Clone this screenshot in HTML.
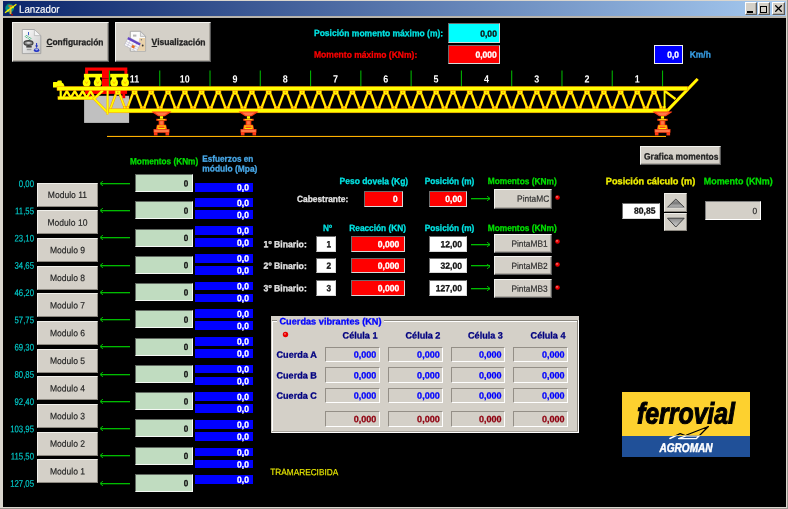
<!DOCTYPE html>
<html><head><meta charset="utf-8"><title>Lanzador</title>
<style>
*{margin:0;padding:0;box-sizing:border-box}
html,body{width:788px;height:509px;overflow:hidden;background:#000}
body{font-family:"Liberation Sans",sans-serif;font-size:9px;color:#000;position:relative;}
.a{position:absolute}
.t{position:absolute;left:0;top:0;white-space:nowrap;line-height:40px;height:40px;transform-origin:0 0}
.btn{position:absolute;background:#d4d0c8;border:1px solid;border-color:#f4f4f0 #5a5a5a #5a5a5a #f4f4f0;box-shadow:inset -0.8px -0.8px 0 #a09c94}
.mod{position:absolute;background:#d4d0c8;left:37px;width:61.2px;height:24px;border:1px solid;border-color:#f0efea #8c8880 #8c8880 #f0efea}
.gb{position:absolute;background:#c0dcc0;left:135.2px;width:58.2px;height:18px;border:1px solid;border-color:#606860 #f4f8f4 #f4f8f4 #606860}
.bb{position:absolute;background:#0000ff;left:194.8px;width:58.2px;height:8.8px}
.ar{position:absolute;height:1.25px;background:#00bc00}
.sun{position:absolute;border:1.4px solid;border-color:#6c6c6c #d8d8d8 #d8d8d8 #6c6c6c}
</style></head><body><div id="w" style="position:absolute;left:0;top:0;width:788px;height:509px;will-change:transform">

<div class="a" style="left:0;top:0;width:788px;height:509px;background:#dad6ce"></div>
<div class="a" style="left:787px;top:0;width:1px;height:509px;background:#9a9690"></div>
<div class="a" style="left:0;top:508px;width:788px;height:1px;background:#9a9690"></div>
<div class="a" style="left:3px;top:16.2px;width:783px;height:1.6px;background:#b8b4ac"></div>
<div class="a" style="left:2.9px;top:17.7px;width:782.9px;height:489.4px;background:#000"></div>
<div class="a" style="left:2.9px;top:1.3px;width:782.9px;height:14.9px;background:linear-gradient(90deg,#0a246a 0%,#a6caf0 100%)"></div>
<svg class="a" style="left:4px;top:2px" width="14" height="14" viewBox="4 2 14 14">
<circle cx="9.6" cy="8.2" r="4.6" fill="#00908c"/>
<circle cx="9.6" cy="8.2" r="4.6" fill="none" stroke="#103050" stroke-width="0.6"/>
<rect x="9.6" y="5.4" width="1.9" height="8.8" fill="#e0b030"/>
<rect x="8.4" y="5.2" width="4.2" height="1.5" fill="#d87018"/>
<path d="M5 12.8 L16.4 4.2" stroke="#f0f000" stroke-width="1.3"/>
<rect x="7.2" y="9.6" width="2" height="1.8" fill="#f0f000"/>
<rect x="12" y="6.4" width="1.8" height="1.8" fill="#f0f000"/>
<circle cx="12" cy="14.6" r="0.9" fill="#c80000"/>
</svg>
<div class="t" style="font-size:10.5px;color:#fff;transform:translate(19.00px,-11.18px) scaleX(0.9273) rotate(0.05deg);-webkit-text-stroke:0.15px;">Lanzador</div>
<div class="a" style="left:745px;top:2.3px;width:11.8px;height:12.3px;background:#d4d0c8;border:1px solid;border-color:#fff #5c5c5c #5c5c5c #fff;box-shadow:inset -0.8px -0.8px 0 #a8a49c"></div>
<div class="a" style="left:757.8px;top:2.3px;width:12.6px;height:12.3px;background:#d4d0c8;border:1px solid;border-color:#fff #5c5c5c #5c5c5c #fff;box-shadow:inset -0.8px -0.8px 0 #a8a49c"></div>
<div class="a" style="left:772px;top:2.3px;width:12.6px;height:12.3px;background:#d4d0c8;border:1px solid;border-color:#fff #5c5c5c #5c5c5c #fff;box-shadow:inset -0.8px -0.8px 0 #a8a49c"></div>
<div class="a" style="left:747.3px;top:11.2px;width:5.6px;height:1.5px;background:#000"></div>
<div class="a" style="left:759.6px;top:5.5px;width:7.6px;height:7px;border:0.9px solid #000;border-top-width:1.5px"></div>
<svg class="a" style="left:774.6px;top:5px" width="7" height="7" viewBox="0 0 7 7"><path d="M0.3 0.3 L6.7 6.7 M6.7 0.3 L0.3 6.7" stroke="#000" stroke-width="1.3"/></svg>
<div class="btn" style="left:12px;top:21.6px;width:96.6px;height:40px"></div>
<div class="btn" style="left:115px;top:21.6px;width:96.4px;height:40px"></div>
<svg class="a" style="left:20px;top:27px" width="24" height="30" viewBox="20 27 24 30">
<defs><linearGradient id="pg" x1="0" y1="0" x2="1" y2="1"><stop offset="0" stop-color="#ffffff"/><stop offset="1" stop-color="#c4c4c4"/></linearGradient></defs>
<path d="M22.3 29.5 H34.4 L40.8 35.6 V53.6 H22.3 Z" fill="url(#pg)" stroke="#9a9a9a" stroke-width="0.8"/>
<path d="M34.4 29.5 V35.6 H40.8 Z" fill="#f4f4f4" stroke="#a8a8a8" stroke-width="0.6"/>
<rect x="28.1" y="32" width="0.9" height="3.2" fill="#2848c0"/>
<path d="M26.6 35.2 l1.3 1.3 l-1.3 1.3 l-1.3 -1.3 z M29.6 37.2 l1.3 1.3 l-1.3 1.3 l-1.3 -1.3 z" fill="none" stroke="#10a060" stroke-width="0.7"/>
<ellipse cx="28.5" cy="43" rx="4.5" ry="2.3" fill="#8a8a8a" stroke="#3c3c3c" stroke-width="1.2"/>
<ellipse cx="28.5" cy="42.8" rx="2.2" ry="0.9" fill="#d8d8d8"/>
<rect x="26.3" y="46" width="5.4" height="1.6" fill="#444"/>
<rect x="26.8" y="48.8" width="4.6" height="1.4" fill="#9a9a9a"/>
<rect x="36.1" y="43" width="1" height="4.6" fill="#2030c0"/>
<path d="M35 45.4 L36.6 47.6 L38.2 45.4 Z" fill="#2030c0"/>
<ellipse cx="36.6" cy="50.2" rx="2.7" ry="1.9" fill="#2434c4"/>
<ellipse cx="36.6" cy="49.6" rx="1.5" ry="0.8" fill="#a8b4f0"/>
</svg>
<svg class="a" style="left:123px;top:29px" width="26" height="26" viewBox="123 29 26 26">
<path d="M130.3 31.3 H140.4 L145.6 36.4 V51.2 H130.3 Z" fill="#fbfbfb" stroke="#9a9a9a" stroke-width="0.8"/>
<path d="M139.4 38 L145.2 38 V50.8 H137 Z" fill="#ead2aa"/>
<path d="M140.4 31.3 V36.4 H145.6 Z" fill="#e8e8e8" stroke="#a0a0a0" stroke-width="0.6"/>
<rect x="133" y="34.6" width="3.4" height="2" fill="#b4b4b4"/>
<g transform="translate(128.4 37.1) rotate(27.1)">
<rect x="0" y="0" width="13.8" height="9.2" fill="#fafafa" stroke="#b0b0b8" stroke-width="0.5"/>
<rect x="0" y="0" width="13.8" height="2.5" fill="#6444c4"/>
<path d="M0 4.8 H13.8 M0 7 H13.8 M3.4 2.5 V9.2 M6.9 2.5 V9.2 M10.4 2.5 V9.2" stroke="#b8b4d0" stroke-width="0.5"/>
<rect x="7.2" y="5" width="2.8" height="2.6" fill="#e86a1c"/>
</g>
<circle cx="142.7" cy="45.5" r="0.9" fill="#333"/>
<circle cx="141.4" cy="39.8" r="0.7" fill="#777"/>
</svg>
<div class="t" style="font-size:9px;color:#222;transform:translate(46.40px,22.10px) scaleX(0.9361) rotate(0.05deg);font-weight:bold;-webkit-text-stroke:0.28px;"><u>C</u>onfiguración</div>
<div class="t" style="font-size:9px;color:#222;transform:translate(151.60px,22.10px) scaleX(0.9498) rotate(0.05deg);font-weight:bold;-webkit-text-stroke:0.28px;"><u>V</u>isualización</div>
<div class="t" style="font-size:9px;color:#00e4e4;transform:translate(314.00px,13.10px) scaleX(0.9464) rotate(0.05deg);font-weight:bold;-webkit-text-stroke:0.28px;">Posición momento máximo (m):</div>
<div class="t" style="font-size:9px;color:#ff0000;transform:translate(314.00px,34.60px) scaleX(0.9477) rotate(0.05deg);font-weight:bold;-webkit-text-stroke:0.28px;">Momento máximo (KNm):</div>
<div class="sun" style="left:447.8px;top:23.3px;width:52.6px;height:19.6px;background:#00ffff"></div>
<div class="t" style="font-size:9px;color:#111;transform:translate(480.26px,13.70px) scaleX(0.9500) rotate(0.05deg);font-weight:bold;-webkit-text-stroke:0.28px;">0,00</div>
<div class="sun" style="left:447.8px;top:45.4px;width:52.6px;height:18.8px;background:#ff0000"></div>
<div class="t" style="font-size:9px;color:#fff;transform:translate(475.50px,34.80px) scaleX(0.9500) rotate(0.05deg);font-weight:bold;-webkit-text-stroke:0.28px;">0,000</div>
<div class="a" style="left:654.3px;top:44.7px;width:29.2px;height:19.6px;background:#0000ff;border:1px solid #f0f0f0"></div>
<div class="t" style="font-size:9px;color:#fff;transform:translate(667.26px,34.80px) scaleX(0.9300) rotate(0.05deg);font-weight:bold;-webkit-text-stroke:0.28px;">0,0</div>
<div class="t" style="font-size:9px;color:#38a0e8;transform:translate(689.80px,34.50px) scaleX(0.9333) rotate(0.05deg);font-weight:bold;-webkit-text-stroke:0.28px;">Km/h</div>
<svg class="a" style="left:0;top:0" width="788" height="145" viewBox="0 0 788 145">
<rect x="84.1" y="95.8" width="45" height="27.1" fill="#c0c0c0"/>
<rect x="85.1" y="67.5" width="42.2" height="3.2" fill="#ff0000"/>
<rect x="85.1" y="70" width="3" height="3.9" fill="#ff0000"/>
<rect x="124.4" y="70" width="2.9" height="3.9" fill="#ff0000"/>
<rect x="102" y="70" width="7.4" height="23.9" fill="#ff0000"/>
<rect x="85.1" y="90" width="42" height="3.9" fill="#ff0000"/>
<rect x="122.4" y="93.5" width="2.8" height="4.7" fill="#ff0000"/>
<rect x="87.9" y="93.5" width="2.7" height="3.6" fill="#ff0000"/>
<rect x="102" y="78" width="6.6" height="0.7" fill="#800000"/>
<rect x="108.90" y="70.5" width="1.1" height="16" fill="#00b000"/>
<rect x="159.18" y="70.5" width="1.1" height="16" fill="#00b000"/>
<rect x="209.46" y="70.5" width="1.1" height="16" fill="#00b000"/>
<rect x="259.74" y="70.5" width="1.1" height="16" fill="#00b000"/>
<rect x="310.02" y="70.5" width="1.1" height="16" fill="#00b000"/>
<rect x="360.30" y="70.5" width="1.1" height="16" fill="#00b000"/>
<rect x="410.58" y="70.5" width="1.1" height="16" fill="#00b000"/>
<rect x="460.86" y="70.5" width="1.1" height="16" fill="#00b000"/>
<rect x="511.14" y="70.5" width="1.1" height="16" fill="#00b000"/>
<rect x="561.42" y="70.5" width="1.1" height="16" fill="#00b000"/>
<rect x="611.70" y="70.5" width="1.1" height="16" fill="#00b000"/>
<rect x="661.98" y="70.5" width="1.1" height="16" fill="#00b000"/>
<rect x="83.9" y="73.8" width="18.1" height="3.6" fill="#ffff00"/>
<rect x="84.3" y="76" width="4.6" height="5" fill="#ffff00"/>
<circle cx="86.6" cy="82.7" r="3.9" fill="#ffff00"/>
<path d="M85.19999999999999 81.4 L86.6 83.6 L88.0 81.4" stroke="#ff9800" stroke-width="0.7" fill="none"/>
<rect x="95.4" y="76" width="4.6" height="5" fill="#ffff00"/>
<circle cx="97.7" cy="82.7" r="3.9" fill="#ffff00"/>
<path d="M96.3 81.4 L97.7 83.6 L99.10000000000001 81.4" stroke="#ff9800" stroke-width="0.7" fill="none"/>
<rect x="110.2" y="73.8" width="18.1" height="3.6" fill="#ffff00"/>
<rect x="111.8" y="76" width="4.6" height="5" fill="#ffff00"/>
<circle cx="114.1" cy="82.7" r="3.9" fill="#ffff00"/>
<path d="M112.69999999999999 81.4 L114.1 83.6 L115.5 81.4" stroke="#ff9800" stroke-width="0.7" fill="none"/>
<rect x="122.8" y="76" width="4.6" height="5" fill="#ffff00"/>
<circle cx="125.1" cy="82.7" r="3.9" fill="#ffff00"/>
<path d="M123.69999999999999 81.4 L125.1 83.6 L126.5 81.4" stroke="#ff9800" stroke-width="0.7" fill="none"/>
<rect x="107" y="135.9" width="559" height="1.1" fill="#ffb000"/>
<path d="M53 82.6 Q53 82.1 53.6 82.1 H57.2 V81.4 Q57.4 80.6 58.4 80.6 H60.8 Q61.8 80.6 61.8 81.6 V82.4 L63.4 83.4 L64.4 85.8 V87 H57 V87.6 H53 Z" fill="#ffff00"/>
<rect x="57.9" y="96.5" width="36.4" height="3.2" fill="#ffff00" stroke="#ff9800" stroke-width="0.4"/>
<rect x="59.6" y="90" width="2.2" height="8" fill="#ffff00"/>
<path d="M63.40 97 L66.85 91 L70.30 97 M71.30 97 L74.75 91 L78.20 97 M79.20 97 L82.65 91 L86.10 97 M87.10 97 L90.55 91 L94.00 97 " stroke="#ff9800" stroke-width="2.5" fill="none"/>
<path d="M63.40 97 L66.85 91 L70.30 97 M71.30 97 L74.75 91 L78.20 97 M79.20 97 L82.65 91 L86.10 97 M87.10 97 L90.55 91 L94.00 97 " stroke="#ffff00" stroke-width="1.7" fill="none"/>
<path d="M102.8 90.5 L94.1 98.8 L107.4 112.4" stroke="#ff9800" stroke-width="2.6" fill="none"/>
<path d="M102.8 90.5 L94.1 98.8 L107.4 112.4" stroke="#ffff00" stroke-width="1.8" fill="none"/>
<path d="M110.40 108.8 L115.78 94.2 M119.78 94.2 L125.16 108.8 M127.16 108.8 L132.54 94.2 M136.54 94.2 L141.92 108.8 M143.92 108.8 L149.30 94.2 M153.30 94.2 L158.68 108.8 M160.68 108.8 L166.06 94.2 M170.06 94.2 L175.44 108.8 M177.44 108.8 L182.82 94.2 M186.82 94.2 L192.20 108.8 M194.20 108.8 L199.58 94.2 M203.58 94.2 L208.96 108.8 M210.96 108.8 L216.34 94.2 M220.34 94.2 L225.72 108.8 M227.72 108.8 L233.10 94.2 M237.10 94.2 L242.48 108.8 M244.48 108.8 L249.86 94.2 M253.86 94.2 L259.24 108.8 M261.24 108.8 L266.62 94.2 M270.62 94.2 L276.00 108.8 M278.00 108.8 L283.38 94.2 M287.38 94.2 L292.76 108.8 M294.76 108.8 L300.14 94.2 M304.14 94.2 L309.52 108.8 M311.52 108.8 L316.90 94.2 M320.90 94.2 L326.28 108.8 M328.28 108.8 L333.66 94.2 M337.66 94.2 L343.04 108.8 M345.04 108.8 L350.42 94.2 M354.42 94.2 L359.80 108.8 M361.80 108.8 L367.18 94.2 M371.18 94.2 L376.56 108.8 M378.56 108.8 L383.94 94.2 M387.94 94.2 L393.32 108.8 M395.32 108.8 L400.70 94.2 M404.70 94.2 L410.08 108.8 M412.08 108.8 L417.46 94.2 M421.46 94.2 L426.84 108.8 M428.84 108.8 L434.22 94.2 M438.22 94.2 L443.60 108.8 M445.60 108.8 L450.98 94.2 M454.98 94.2 L460.36 108.8 M462.36 108.8 L467.74 94.2 M471.74 94.2 L477.12 108.8 M479.12 108.8 L484.50 94.2 M488.50 94.2 L493.88 108.8 M495.88 108.8 L501.26 94.2 M505.26 94.2 L510.64 108.8 M512.64 108.8 L518.02 94.2 M522.02 94.2 L527.40 108.8 M529.40 108.8 L534.78 94.2 M538.78 94.2 L544.16 108.8 M546.16 108.8 L551.54 94.2 M555.54 94.2 L560.92 108.8 M562.92 108.8 L568.30 94.2 M572.30 94.2 L577.68 108.8 M579.68 108.8 L585.06 94.2 M589.06 94.2 L594.44 108.8 M596.44 108.8 L601.82 94.2 M605.82 94.2 L611.20 108.8 M613.20 108.8 L618.58 94.2 M622.58 94.2 L627.96 108.8 M629.96 108.8 L635.34 94.2 M639.34 94.2 L644.72 108.8 M646.72 108.8 L652.10 94.2 M656.10 94.2 L661.48 108.8 " stroke="#ff9800" stroke-width="2.5" fill="none"/>
<path d="M110.40 108.8 L115.78 94.2 M119.78 94.2 L125.16 108.8 M127.16 108.8 L132.54 94.2 M136.54 94.2 L141.92 108.8 M143.92 108.8 L149.30 94.2 M153.30 94.2 L158.68 108.8 M160.68 108.8 L166.06 94.2 M170.06 94.2 L175.44 108.8 M177.44 108.8 L182.82 94.2 M186.82 94.2 L192.20 108.8 M194.20 108.8 L199.58 94.2 M203.58 94.2 L208.96 108.8 M210.96 108.8 L216.34 94.2 M220.34 94.2 L225.72 108.8 M227.72 108.8 L233.10 94.2 M237.10 94.2 L242.48 108.8 M244.48 108.8 L249.86 94.2 M253.86 94.2 L259.24 108.8 M261.24 108.8 L266.62 94.2 M270.62 94.2 L276.00 108.8 M278.00 108.8 L283.38 94.2 M287.38 94.2 L292.76 108.8 M294.76 108.8 L300.14 94.2 M304.14 94.2 L309.52 108.8 M311.52 108.8 L316.90 94.2 M320.90 94.2 L326.28 108.8 M328.28 108.8 L333.66 94.2 M337.66 94.2 L343.04 108.8 M345.04 108.8 L350.42 94.2 M354.42 94.2 L359.80 108.8 M361.80 108.8 L367.18 94.2 M371.18 94.2 L376.56 108.8 M378.56 108.8 L383.94 94.2 M387.94 94.2 L393.32 108.8 M395.32 108.8 L400.70 94.2 M404.70 94.2 L410.08 108.8 M412.08 108.8 L417.46 94.2 M421.46 94.2 L426.84 108.8 M428.84 108.8 L434.22 94.2 M438.22 94.2 L443.60 108.8 M445.60 108.8 L450.98 94.2 M454.98 94.2 L460.36 108.8 M462.36 108.8 L467.74 94.2 M471.74 94.2 L477.12 108.8 M479.12 108.8 L484.50 94.2 M488.50 94.2 L493.88 108.8 M495.88 108.8 L501.26 94.2 M505.26 94.2 L510.64 108.8 M512.64 108.8 L518.02 94.2 M522.02 94.2 L527.40 108.8 M529.40 108.8 L534.78 94.2 M538.78 94.2 L544.16 108.8 M546.16 108.8 L551.54 94.2 M555.54 94.2 L560.92 108.8 M562.92 108.8 L568.30 94.2 M572.30 94.2 L577.68 108.8 M579.68 108.8 L585.06 94.2 M589.06 94.2 L594.44 108.8 M596.44 108.8 L601.82 94.2 M605.82 94.2 L611.20 108.8 M613.20 108.8 L618.58 94.2 M622.58 94.2 L627.96 108.8 M629.96 108.8 L635.34 94.2 M639.34 94.2 L644.72 108.8 M646.72 108.8 L652.10 94.2 M656.10 94.2 L661.48 108.8 " stroke="#ffff00" stroke-width="1.5" fill="none"/>
<rect x="115.18" y="90.3" width="5.2" height="4.4" fill="#ffff00" stroke="#ff9800" stroke-width="0.5"/>
<rect x="116.98" y="91.6" width="1.6" height="1.5" fill="#ff9800"/>
<rect x="131.94" y="90.3" width="5.2" height="4.4" fill="#ffff00" stroke="#ff9800" stroke-width="0.5"/>
<rect x="133.74" y="91.6" width="1.6" height="1.5" fill="#ff9800"/>
<rect x="148.70" y="90.3" width="5.2" height="4.4" fill="#ffff00" stroke="#ff9800" stroke-width="0.5"/>
<rect x="150.50" y="91.6" width="1.6" height="1.5" fill="#ff9800"/>
<rect x="165.46" y="90.3" width="5.2" height="4.4" fill="#ffff00" stroke="#ff9800" stroke-width="0.5"/>
<rect x="167.26" y="91.6" width="1.6" height="1.5" fill="#ff9800"/>
<rect x="182.22" y="90.3" width="5.2" height="4.4" fill="#ffff00" stroke="#ff9800" stroke-width="0.5"/>
<rect x="184.02" y="91.6" width="1.6" height="1.5" fill="#ff9800"/>
<rect x="198.98" y="90.3" width="5.2" height="4.4" fill="#ffff00" stroke="#ff9800" stroke-width="0.5"/>
<rect x="200.78" y="91.6" width="1.6" height="1.5" fill="#ff9800"/>
<rect x="215.74" y="90.3" width="5.2" height="4.4" fill="#ffff00" stroke="#ff9800" stroke-width="0.5"/>
<rect x="217.54" y="91.6" width="1.6" height="1.5" fill="#ff9800"/>
<rect x="232.50" y="90.3" width="5.2" height="4.4" fill="#ffff00" stroke="#ff9800" stroke-width="0.5"/>
<rect x="234.30" y="91.6" width="1.6" height="1.5" fill="#ff9800"/>
<rect x="249.26" y="90.3" width="5.2" height="4.4" fill="#ffff00" stroke="#ff9800" stroke-width="0.5"/>
<rect x="251.06" y="91.6" width="1.6" height="1.5" fill="#ff9800"/>
<rect x="266.02" y="90.3" width="5.2" height="4.4" fill="#ffff00" stroke="#ff9800" stroke-width="0.5"/>
<rect x="267.82" y="91.6" width="1.6" height="1.5" fill="#ff9800"/>
<rect x="282.78" y="90.3" width="5.2" height="4.4" fill="#ffff00" stroke="#ff9800" stroke-width="0.5"/>
<rect x="284.58" y="91.6" width="1.6" height="1.5" fill="#ff9800"/>
<rect x="299.54" y="90.3" width="5.2" height="4.4" fill="#ffff00" stroke="#ff9800" stroke-width="0.5"/>
<rect x="301.34" y="91.6" width="1.6" height="1.5" fill="#ff9800"/>
<rect x="316.30" y="90.3" width="5.2" height="4.4" fill="#ffff00" stroke="#ff9800" stroke-width="0.5"/>
<rect x="318.10" y="91.6" width="1.6" height="1.5" fill="#ff9800"/>
<rect x="333.06" y="90.3" width="5.2" height="4.4" fill="#ffff00" stroke="#ff9800" stroke-width="0.5"/>
<rect x="334.86" y="91.6" width="1.6" height="1.5" fill="#ff9800"/>
<rect x="349.82" y="90.3" width="5.2" height="4.4" fill="#ffff00" stroke="#ff9800" stroke-width="0.5"/>
<rect x="351.62" y="91.6" width="1.6" height="1.5" fill="#ff9800"/>
<rect x="366.58" y="90.3" width="5.2" height="4.4" fill="#ffff00" stroke="#ff9800" stroke-width="0.5"/>
<rect x="368.38" y="91.6" width="1.6" height="1.5" fill="#ff9800"/>
<rect x="383.34" y="90.3" width="5.2" height="4.4" fill="#ffff00" stroke="#ff9800" stroke-width="0.5"/>
<rect x="385.14" y="91.6" width="1.6" height="1.5" fill="#ff9800"/>
<rect x="400.10" y="90.3" width="5.2" height="4.4" fill="#ffff00" stroke="#ff9800" stroke-width="0.5"/>
<rect x="401.90" y="91.6" width="1.6" height="1.5" fill="#ff9800"/>
<rect x="416.86" y="90.3" width="5.2" height="4.4" fill="#ffff00" stroke="#ff9800" stroke-width="0.5"/>
<rect x="418.66" y="91.6" width="1.6" height="1.5" fill="#ff9800"/>
<rect x="433.62" y="90.3" width="5.2" height="4.4" fill="#ffff00" stroke="#ff9800" stroke-width="0.5"/>
<rect x="435.42" y="91.6" width="1.6" height="1.5" fill="#ff9800"/>
<rect x="450.38" y="90.3" width="5.2" height="4.4" fill="#ffff00" stroke="#ff9800" stroke-width="0.5"/>
<rect x="452.18" y="91.6" width="1.6" height="1.5" fill="#ff9800"/>
<rect x="467.14" y="90.3" width="5.2" height="4.4" fill="#ffff00" stroke="#ff9800" stroke-width="0.5"/>
<rect x="468.94" y="91.6" width="1.6" height="1.5" fill="#ff9800"/>
<rect x="483.90" y="90.3" width="5.2" height="4.4" fill="#ffff00" stroke="#ff9800" stroke-width="0.5"/>
<rect x="485.70" y="91.6" width="1.6" height="1.5" fill="#ff9800"/>
<rect x="500.66" y="90.3" width="5.2" height="4.4" fill="#ffff00" stroke="#ff9800" stroke-width="0.5"/>
<rect x="502.46" y="91.6" width="1.6" height="1.5" fill="#ff9800"/>
<rect x="517.42" y="90.3" width="5.2" height="4.4" fill="#ffff00" stroke="#ff9800" stroke-width="0.5"/>
<rect x="519.22" y="91.6" width="1.6" height="1.5" fill="#ff9800"/>
<rect x="534.18" y="90.3" width="5.2" height="4.4" fill="#ffff00" stroke="#ff9800" stroke-width="0.5"/>
<rect x="535.98" y="91.6" width="1.6" height="1.5" fill="#ff9800"/>
<rect x="550.94" y="90.3" width="5.2" height="4.4" fill="#ffff00" stroke="#ff9800" stroke-width="0.5"/>
<rect x="552.74" y="91.6" width="1.6" height="1.5" fill="#ff9800"/>
<rect x="567.70" y="90.3" width="5.2" height="4.4" fill="#ffff00" stroke="#ff9800" stroke-width="0.5"/>
<rect x="569.50" y="91.6" width="1.6" height="1.5" fill="#ff9800"/>
<rect x="584.46" y="90.3" width="5.2" height="4.4" fill="#ffff00" stroke="#ff9800" stroke-width="0.5"/>
<rect x="586.26" y="91.6" width="1.6" height="1.5" fill="#ff9800"/>
<rect x="601.22" y="90.3" width="5.2" height="4.4" fill="#ffff00" stroke="#ff9800" stroke-width="0.5"/>
<rect x="603.02" y="91.6" width="1.6" height="1.5" fill="#ff9800"/>
<rect x="617.98" y="90.3" width="5.2" height="4.4" fill="#ffff00" stroke="#ff9800" stroke-width="0.5"/>
<rect x="619.78" y="91.6" width="1.6" height="1.5" fill="#ff9800"/>
<rect x="634.74" y="90.3" width="5.2" height="4.4" fill="#ffff00" stroke="#ff9800" stroke-width="0.5"/>
<rect x="636.54" y="91.6" width="1.6" height="1.5" fill="#ff9800"/>
<rect x="651.50" y="90.3" width="5.2" height="4.4" fill="#ffff00" stroke="#ff9800" stroke-width="0.5"/>
<rect x="653.30" y="91.6" width="1.6" height="1.5" fill="#ff9800"/>
<rect x="123.46" y="106.3" width="2.3" height="2.6" fill="#ffff00" stroke="#ff9800" stroke-width="0.5"/>
<rect x="126.56" y="106.3" width="2.3" height="2.6" fill="#ffff00" stroke="#ff9800" stroke-width="0.5"/>
<rect x="140.22" y="106.3" width="2.3" height="2.6" fill="#ffff00" stroke="#ff9800" stroke-width="0.5"/>
<rect x="143.32" y="106.3" width="2.3" height="2.6" fill="#ffff00" stroke="#ff9800" stroke-width="0.5"/>
<rect x="156.98" y="106.3" width="2.3" height="2.6" fill="#ffff00" stroke="#ff9800" stroke-width="0.5"/>
<rect x="160.08" y="106.3" width="2.3" height="2.6" fill="#ffff00" stroke="#ff9800" stroke-width="0.5"/>
<rect x="173.74" y="106.3" width="2.3" height="2.6" fill="#ffff00" stroke="#ff9800" stroke-width="0.5"/>
<rect x="176.84" y="106.3" width="2.3" height="2.6" fill="#ffff00" stroke="#ff9800" stroke-width="0.5"/>
<rect x="190.50" y="106.3" width="2.3" height="2.6" fill="#ffff00" stroke="#ff9800" stroke-width="0.5"/>
<rect x="193.60" y="106.3" width="2.3" height="2.6" fill="#ffff00" stroke="#ff9800" stroke-width="0.5"/>
<rect x="207.26" y="106.3" width="2.3" height="2.6" fill="#ffff00" stroke="#ff9800" stroke-width="0.5"/>
<rect x="210.36" y="106.3" width="2.3" height="2.6" fill="#ffff00" stroke="#ff9800" stroke-width="0.5"/>
<rect x="224.02" y="106.3" width="2.3" height="2.6" fill="#ffff00" stroke="#ff9800" stroke-width="0.5"/>
<rect x="227.12" y="106.3" width="2.3" height="2.6" fill="#ffff00" stroke="#ff9800" stroke-width="0.5"/>
<rect x="240.78" y="106.3" width="2.3" height="2.6" fill="#ffff00" stroke="#ff9800" stroke-width="0.5"/>
<rect x="243.88" y="106.3" width="2.3" height="2.6" fill="#ffff00" stroke="#ff9800" stroke-width="0.5"/>
<rect x="257.54" y="106.3" width="2.3" height="2.6" fill="#ffff00" stroke="#ff9800" stroke-width="0.5"/>
<rect x="260.64" y="106.3" width="2.3" height="2.6" fill="#ffff00" stroke="#ff9800" stroke-width="0.5"/>
<rect x="274.30" y="106.3" width="2.3" height="2.6" fill="#ffff00" stroke="#ff9800" stroke-width="0.5"/>
<rect x="277.40" y="106.3" width="2.3" height="2.6" fill="#ffff00" stroke="#ff9800" stroke-width="0.5"/>
<rect x="291.06" y="106.3" width="2.3" height="2.6" fill="#ffff00" stroke="#ff9800" stroke-width="0.5"/>
<rect x="294.16" y="106.3" width="2.3" height="2.6" fill="#ffff00" stroke="#ff9800" stroke-width="0.5"/>
<rect x="307.82" y="106.3" width="2.3" height="2.6" fill="#ffff00" stroke="#ff9800" stroke-width="0.5"/>
<rect x="310.92" y="106.3" width="2.3" height="2.6" fill="#ffff00" stroke="#ff9800" stroke-width="0.5"/>
<rect x="324.58" y="106.3" width="2.3" height="2.6" fill="#ffff00" stroke="#ff9800" stroke-width="0.5"/>
<rect x="327.68" y="106.3" width="2.3" height="2.6" fill="#ffff00" stroke="#ff9800" stroke-width="0.5"/>
<rect x="341.34" y="106.3" width="2.3" height="2.6" fill="#ffff00" stroke="#ff9800" stroke-width="0.5"/>
<rect x="344.44" y="106.3" width="2.3" height="2.6" fill="#ffff00" stroke="#ff9800" stroke-width="0.5"/>
<rect x="358.10" y="106.3" width="2.3" height="2.6" fill="#ffff00" stroke="#ff9800" stroke-width="0.5"/>
<rect x="361.20" y="106.3" width="2.3" height="2.6" fill="#ffff00" stroke="#ff9800" stroke-width="0.5"/>
<rect x="374.86" y="106.3" width="2.3" height="2.6" fill="#ffff00" stroke="#ff9800" stroke-width="0.5"/>
<rect x="377.96" y="106.3" width="2.3" height="2.6" fill="#ffff00" stroke="#ff9800" stroke-width="0.5"/>
<rect x="391.62" y="106.3" width="2.3" height="2.6" fill="#ffff00" stroke="#ff9800" stroke-width="0.5"/>
<rect x="394.72" y="106.3" width="2.3" height="2.6" fill="#ffff00" stroke="#ff9800" stroke-width="0.5"/>
<rect x="408.38" y="106.3" width="2.3" height="2.6" fill="#ffff00" stroke="#ff9800" stroke-width="0.5"/>
<rect x="411.48" y="106.3" width="2.3" height="2.6" fill="#ffff00" stroke="#ff9800" stroke-width="0.5"/>
<rect x="425.14" y="106.3" width="2.3" height="2.6" fill="#ffff00" stroke="#ff9800" stroke-width="0.5"/>
<rect x="428.24" y="106.3" width="2.3" height="2.6" fill="#ffff00" stroke="#ff9800" stroke-width="0.5"/>
<rect x="441.90" y="106.3" width="2.3" height="2.6" fill="#ffff00" stroke="#ff9800" stroke-width="0.5"/>
<rect x="445.00" y="106.3" width="2.3" height="2.6" fill="#ffff00" stroke="#ff9800" stroke-width="0.5"/>
<rect x="458.66" y="106.3" width="2.3" height="2.6" fill="#ffff00" stroke="#ff9800" stroke-width="0.5"/>
<rect x="461.76" y="106.3" width="2.3" height="2.6" fill="#ffff00" stroke="#ff9800" stroke-width="0.5"/>
<rect x="475.42" y="106.3" width="2.3" height="2.6" fill="#ffff00" stroke="#ff9800" stroke-width="0.5"/>
<rect x="478.52" y="106.3" width="2.3" height="2.6" fill="#ffff00" stroke="#ff9800" stroke-width="0.5"/>
<rect x="492.18" y="106.3" width="2.3" height="2.6" fill="#ffff00" stroke="#ff9800" stroke-width="0.5"/>
<rect x="495.28" y="106.3" width="2.3" height="2.6" fill="#ffff00" stroke="#ff9800" stroke-width="0.5"/>
<rect x="508.94" y="106.3" width="2.3" height="2.6" fill="#ffff00" stroke="#ff9800" stroke-width="0.5"/>
<rect x="512.04" y="106.3" width="2.3" height="2.6" fill="#ffff00" stroke="#ff9800" stroke-width="0.5"/>
<rect x="525.70" y="106.3" width="2.3" height="2.6" fill="#ffff00" stroke="#ff9800" stroke-width="0.5"/>
<rect x="528.80" y="106.3" width="2.3" height="2.6" fill="#ffff00" stroke="#ff9800" stroke-width="0.5"/>
<rect x="542.46" y="106.3" width="2.3" height="2.6" fill="#ffff00" stroke="#ff9800" stroke-width="0.5"/>
<rect x="545.56" y="106.3" width="2.3" height="2.6" fill="#ffff00" stroke="#ff9800" stroke-width="0.5"/>
<rect x="559.22" y="106.3" width="2.3" height="2.6" fill="#ffff00" stroke="#ff9800" stroke-width="0.5"/>
<rect x="562.32" y="106.3" width="2.3" height="2.6" fill="#ffff00" stroke="#ff9800" stroke-width="0.5"/>
<rect x="575.98" y="106.3" width="2.3" height="2.6" fill="#ffff00" stroke="#ff9800" stroke-width="0.5"/>
<rect x="579.08" y="106.3" width="2.3" height="2.6" fill="#ffff00" stroke="#ff9800" stroke-width="0.5"/>
<rect x="592.74" y="106.3" width="2.3" height="2.6" fill="#ffff00" stroke="#ff9800" stroke-width="0.5"/>
<rect x="595.84" y="106.3" width="2.3" height="2.6" fill="#ffff00" stroke="#ff9800" stroke-width="0.5"/>
<rect x="609.50" y="106.3" width="2.3" height="2.6" fill="#ffff00" stroke="#ff9800" stroke-width="0.5"/>
<rect x="612.60" y="106.3" width="2.3" height="2.6" fill="#ffff00" stroke="#ff9800" stroke-width="0.5"/>
<rect x="626.26" y="106.3" width="2.3" height="2.6" fill="#ffff00" stroke="#ff9800" stroke-width="0.5"/>
<rect x="629.36" y="106.3" width="2.3" height="2.6" fill="#ffff00" stroke="#ff9800" stroke-width="0.5"/>
<rect x="643.02" y="106.3" width="2.3" height="2.6" fill="#ffff00" stroke="#ff9800" stroke-width="0.5"/>
<rect x="646.12" y="106.3" width="2.3" height="2.6" fill="#ffff00" stroke="#ff9800" stroke-width="0.5"/>
<rect x="659.78" y="106.3" width="2.3" height="2.6" fill="#ffff00" stroke="#ff9800" stroke-width="0.5"/>
<rect x="662.88" y="106.3" width="2.3" height="2.6" fill="#ffff00" stroke="#ff9800" stroke-width="0.5"/>
<path d="M666.6 111.4 L697.6 79" stroke="#ff9800" stroke-width="3.2" fill="none"/>
<path d="M666.6 111.4 L697.6 79" stroke="#ffff00" stroke-width="2.4" fill="none"/>
<path d="M664.8 91 L675.4 99" stroke="#ff9800" stroke-width="2.6" fill="none"/>
<path d="M664.8 91 L675.4 99" stroke="#ffff00" stroke-width="1.7" fill="none"/>
<rect x="663.6" y="90" width="1.9" height="19" fill="#ffff00"/>
<rect x="106.7" y="90" width="1.9" height="24.6" fill="#ffff00" stroke="#ff9800" stroke-width="0.3"/>
<rect x="57" y="86.5" width="630.6" height="4" fill="#ffff00" stroke="#ff9800" stroke-width="0.5"/>
<rect x="108.8" y="108.8" width="558.4" height="4" fill="#ffff00" stroke="#ff9800" stroke-width="0.5"/>
<g transform="translate(161.5 0)">
<path d="M-9.8 111.4 H9.8 L9 112.6 L3.4 116.2 H-3.4 L-9 112.6 Z" fill="#ff3c14"/>
<path d="M-6.5 112.6 H6.5 L2.6 115.4 H-2.6 Z" fill="#ff7848"/>
<rect x="-1.6" y="116.2" width="3.2" height="2.6" fill="#ffff00"/>
<rect x="-5.2" y="118.8" width="10.4" height="2" fill="#ff3c14"/>
<rect x="-3.8" y="119.3" width="7.6" height="0.9" fill="#ffff00"/>
<rect x="-2.8" y="120.8" width="5.6" height="4.4" fill="#ff3c14"/>
<rect x="-1.4" y="121.2" width="2.8" height="3.6" fill="#ff7848"/>
<path d="M-4.6 124.8 H4.6 L5.6 129.4 H-5.6 Z" fill="#ff3c14"/>
<rect x="-3.6" y="126" width="7.2" height="2.4" fill="none" stroke="#ffff00" stroke-width="0.9"/>
<rect x="-7.6" y="129.4" width="15.2" height="3" fill="#ff7848" stroke="#ff3c14" stroke-width="0.6"/>
<rect x="-7.6" y="132" width="3.6" height="3.4" fill="#ff3c14"/>
<rect x="4" y="132" width="3.6" height="3.4" fill="#ff3c14"/>
</g>
<g transform="translate(248.5 0)">
<path d="M-9.8 111.4 H9.8 L9 112.6 L3.4 116.2 H-3.4 L-9 112.6 Z" fill="#ff3c14"/>
<path d="M-6.5 112.6 H6.5 L2.6 115.4 H-2.6 Z" fill="#ff7848"/>
<rect x="-1.6" y="116.2" width="3.2" height="2.6" fill="#ffff00"/>
<rect x="-5.2" y="118.8" width="10.4" height="2" fill="#ff3c14"/>
<rect x="-3.8" y="119.3" width="7.6" height="0.9" fill="#ffff00"/>
<rect x="-2.8" y="120.8" width="5.6" height="4.4" fill="#ff3c14"/>
<rect x="-1.4" y="121.2" width="2.8" height="3.6" fill="#ff7848"/>
<path d="M-4.6 124.8 H4.6 L5.6 129.4 H-5.6 Z" fill="#ff3c14"/>
<rect x="-3.6" y="126" width="7.2" height="2.4" fill="none" stroke="#ffff00" stroke-width="0.9"/>
<rect x="-7.6" y="129.4" width="15.2" height="3" fill="#ff7848" stroke="#ff3c14" stroke-width="0.6"/>
<rect x="-7.6" y="132" width="3.6" height="3.4" fill="#ff3c14"/>
<rect x="4" y="132" width="3.6" height="3.4" fill="#ff3c14"/>
</g>
<g transform="translate(662.5 0)">
<path d="M-9.8 111.4 H9.8 L9 112.6 L3.4 116.2 H-3.4 L-9 112.6 Z" fill="#ff3c14"/>
<path d="M-6.5 112.6 H6.5 L2.6 115.4 H-2.6 Z" fill="#ff7848"/>
<rect x="-1.6" y="116.2" width="3.2" height="2.6" fill="#ffff00"/>
<rect x="-5.2" y="118.8" width="10.4" height="2" fill="#ff3c14"/>
<rect x="-3.8" y="119.3" width="7.6" height="0.9" fill="#ffff00"/>
<rect x="-2.8" y="120.8" width="5.6" height="4.4" fill="#ff3c14"/>
<rect x="-1.4" y="121.2" width="2.8" height="3.6" fill="#ff7848"/>
<path d="M-4.6 124.8 H4.6 L5.6 129.4 H-5.6 Z" fill="#ff3c14"/>
<rect x="-3.6" y="126" width="7.2" height="2.4" fill="none" stroke="#ffff00" stroke-width="0.9"/>
<rect x="-7.6" y="129.4" width="15.2" height="3" fill="#ff7848" stroke="#ff3c14" stroke-width="0.6"/>
<rect x="-7.6" y="132" width="3.6" height="3.4" fill="#ff3c14"/>
<rect x="4" y="132" width="3.6" height="3.4" fill="#ff3c14"/>
</g>
</svg>
<div class="t" style="font-size:10.4px;color:#fff;transform:translate(129.71px,59.39px) scaleX(0.8600) rotate(0.05deg);font-weight:bold;-webkit-text-stroke:0px;">11</div>
<div class="t" style="font-size:10.4px;color:#fff;transform:translate(179.75px,59.39px) scaleX(0.8600) rotate(0.05deg);font-weight:bold;-webkit-text-stroke:0px;">10</div>
<div class="t" style="font-size:10.4px;color:#fff;transform:translate(232.51px,59.39px) scaleX(0.8600) rotate(0.05deg);font-weight:bold;-webkit-text-stroke:0px;">9</div>
<div class="t" style="font-size:10.4px;color:#fff;transform:translate(282.79px,59.39px) scaleX(0.8600) rotate(0.05deg);font-weight:bold;-webkit-text-stroke:0px;">8</div>
<div class="t" style="font-size:10.4px;color:#fff;transform:translate(333.07px,59.39px) scaleX(0.8600) rotate(0.05deg);font-weight:bold;-webkit-text-stroke:0px;">7</div>
<div class="t" style="font-size:10.4px;color:#fff;transform:translate(383.35px,59.39px) scaleX(0.8600) rotate(0.05deg);font-weight:bold;-webkit-text-stroke:0px;">6</div>
<div class="t" style="font-size:10.4px;color:#fff;transform:translate(433.63px,59.39px) scaleX(0.8600) rotate(0.05deg);font-weight:bold;-webkit-text-stroke:0px;">5</div>
<div class="t" style="font-size:10.4px;color:#fff;transform:translate(483.91px,59.39px) scaleX(0.8600) rotate(0.05deg);font-weight:bold;-webkit-text-stroke:0px;">4</div>
<div class="t" style="font-size:10.4px;color:#fff;transform:translate(534.19px,59.39px) scaleX(0.8600) rotate(0.05deg);font-weight:bold;-webkit-text-stroke:0px;">3</div>
<div class="t" style="font-size:10.4px;color:#fff;transform:translate(584.47px,59.39px) scaleX(0.8600) rotate(0.05deg);font-weight:bold;-webkit-text-stroke:0px;">2</div>
<div class="t" style="font-size:10.4px;color:#fff;transform:translate(634.75px,59.39px) scaleX(0.8600) rotate(0.05deg);font-weight:bold;-webkit-text-stroke:0px;">1</div>
<div class="t" style="font-size:9px;color:#00e000;transform:translate(130.00px,141.20px) scaleX(0.9155) rotate(0.05deg);font-weight:bold;-webkit-text-stroke:0.28px;">Momentos (KNm)</div>
<div class="t" style="font-size:9px;color:#48a8e8;transform:translate(202.30px,138.80px) scaleX(0.9104) rotate(0.05deg);font-weight:bold;-webkit-text-stroke:0.28px;">Esfuerzos en</div>
<div class="t" style="font-size:9px;color:#48a8e8;transform:translate(202.30px,148.60px) scaleX(0.9341) rotate(0.05deg);font-weight:bold;-webkit-text-stroke:0.28px;">módulo (Mpa)</div>
<div class="t" style="font-size:9.6px;color:#00d0d0;transform:translate(18.87px,164.01px) scaleX(0.8100) rotate(0.05deg);-webkit-text-stroke:0.15px;">0,00</div>
<div class="ar" style="left:100.5px;width:29.2px;top:183px;height:1px;box-shadow:0 1px 0 #003c00"></div>
<svg class="a" style="left:99.3px;top:180.00px" width="5" height="7" viewBox="0 0 5 7"><path d="M3.9 1.2 L1 3.5 L3.9 5.8" stroke="#00c800" stroke-width="0.95" fill="none"/></svg>
<div class="gb" style="top:174.20px"></div>
<div class="t" style="font-size:9px;color:#111;transform:translate(183.80px,163.60px) scaleX(0.9000) rotate(0.05deg);font-weight:bold;-webkit-text-stroke:0.28px;">0</div>
<div class="t" style="font-size:9.6px;color:#00d0d0;transform:translate(15.12px,191.26px) scaleX(0.8100) rotate(0.05deg);-webkit-text-stroke:0.15px;">11,55</div>
<div class="ar" style="left:100.5px;width:29.2px;top:210px;height:1px;box-shadow:0 1px 0 #003c00"></div>
<svg class="a" style="left:99.3px;top:207.25px" width="5" height="7" viewBox="0 0 5 7"><path d="M3.9 1.2 L1 3.5 L3.9 5.8" stroke="#00c800" stroke-width="0.95" fill="none"/></svg>
<div class="gb" style="top:201.44px"></div>
<div class="t" style="font-size:9px;color:#111;transform:translate(183.80px,190.85px) scaleX(0.9000) rotate(0.05deg);font-weight:bold;-webkit-text-stroke:0.28px;">0</div>
<div class="t" style="font-size:9.6px;color:#00d0d0;transform:translate(14.54px,218.50px) scaleX(0.8100) rotate(0.05deg);-webkit-text-stroke:0.15px;">23,10</div>
<div class="ar" style="left:100.5px;width:29.2px;top:237px;height:1px;box-shadow:0 1px 0 #003c00"></div>
<svg class="a" style="left:99.3px;top:234.49px" width="5" height="7" viewBox="0 0 5 7"><path d="M3.9 1.2 L1 3.5 L3.9 5.8" stroke="#00c800" stroke-width="0.95" fill="none"/></svg>
<div class="gb" style="top:228.69px"></div>
<div class="t" style="font-size:9px;color:#111;transform:translate(183.80px,218.09px) scaleX(0.9000) rotate(0.05deg);font-weight:bold;-webkit-text-stroke:0.28px;">0</div>
<div class="t" style="font-size:9.6px;color:#00d0d0;transform:translate(14.54px,245.75px) scaleX(0.8100) rotate(0.05deg);-webkit-text-stroke:0.15px;">34,65</div>
<div class="ar" style="left:100.5px;width:29.2px;top:265px;height:1px;box-shadow:0 1px 0 #003c00"></div>
<svg class="a" style="left:99.3px;top:261.74px" width="5" height="7" viewBox="0 0 5 7"><path d="M3.9 1.2 L1 3.5 L3.9 5.8" stroke="#00c800" stroke-width="0.95" fill="none"/></svg>
<div class="gb" style="top:255.94px"></div>
<div class="t" style="font-size:9px;color:#111;transform:translate(183.80px,245.34px) scaleX(0.9000) rotate(0.05deg);font-weight:bold;-webkit-text-stroke:0.28px;">0</div>
<div class="t" style="font-size:9.6px;color:#00d0d0;transform:translate(14.54px,272.99px) scaleX(0.8100) rotate(0.05deg);-webkit-text-stroke:0.15px;">46,20</div>
<div class="ar" style="left:100.5px;width:29.2px;top:292px;height:1px;box-shadow:0 1px 0 #003c00"></div>
<svg class="a" style="left:99.3px;top:288.98px" width="5" height="7" viewBox="0 0 5 7"><path d="M3.9 1.2 L1 3.5 L3.9 5.8" stroke="#00c800" stroke-width="0.95" fill="none"/></svg>
<div class="gb" style="top:283.18px"></div>
<div class="t" style="font-size:9px;color:#111;transform:translate(183.80px,272.59px) scaleX(0.9000) rotate(0.05deg);font-weight:bold;-webkit-text-stroke:0.28px;">0</div>
<div class="t" style="font-size:9.6px;color:#00d0d0;transform:translate(14.54px,300.24px) scaleX(0.8100) rotate(0.05deg);-webkit-text-stroke:0.15px;">57,75</div>
<div class="ar" style="left:100.5px;width:29.2px;top:319px;height:1px;box-shadow:0 1px 0 #003c00"></div>
<svg class="a" style="left:99.3px;top:316.23px" width="5" height="7" viewBox="0 0 5 7"><path d="M3.9 1.2 L1 3.5 L3.9 5.8" stroke="#00c800" stroke-width="0.95" fill="none"/></svg>
<div class="gb" style="top:310.43px"></div>
<div class="t" style="font-size:9px;color:#111;transform:translate(183.80px,299.83px) scaleX(0.9000) rotate(0.05deg);font-weight:bold;-webkit-text-stroke:0.28px;">0</div>
<div class="t" style="font-size:9.6px;color:#00d0d0;transform:translate(14.54px,327.48px) scaleX(0.8100) rotate(0.05deg);-webkit-text-stroke:0.15px;">69,30</div>
<div class="ar" style="left:100.5px;width:29.2px;top:346px;height:1px;box-shadow:0 1px 0 #003c00"></div>
<svg class="a" style="left:99.3px;top:343.47px" width="5" height="7" viewBox="0 0 5 7"><path d="M3.9 1.2 L1 3.5 L3.9 5.8" stroke="#00c800" stroke-width="0.95" fill="none"/></svg>
<div class="gb" style="top:337.67px"></div>
<div class="t" style="font-size:9px;color:#111;transform:translate(183.80px,327.08px) scaleX(0.9000) rotate(0.05deg);font-weight:bold;-webkit-text-stroke:0.28px;">0</div>
<div class="t" style="font-size:9.6px;color:#00d0d0;transform:translate(14.54px,354.73px) scaleX(0.8100) rotate(0.05deg);-webkit-text-stroke:0.15px;">80,85</div>
<div class="ar" style="left:100.5px;width:29.2px;top:374px;height:1px;box-shadow:0 1px 0 #003c00"></div>
<svg class="a" style="left:99.3px;top:370.72px" width="5" height="7" viewBox="0 0 5 7"><path d="M3.9 1.2 L1 3.5 L3.9 5.8" stroke="#00c800" stroke-width="0.95" fill="none"/></svg>
<div class="gb" style="top:364.92px"></div>
<div class="t" style="font-size:9px;color:#111;transform:translate(183.80px,354.32px) scaleX(0.9000) rotate(0.05deg);font-weight:bold;-webkit-text-stroke:0.28px;">0</div>
<div class="t" style="font-size:9.6px;color:#00d0d0;transform:translate(14.54px,381.97px) scaleX(0.8100) rotate(0.05deg);-webkit-text-stroke:0.15px;">92,40</div>
<div class="ar" style="left:100.5px;width:29.2px;top:401px;height:1px;box-shadow:0 1px 0 #003c00"></div>
<svg class="a" style="left:99.3px;top:397.96px" width="5" height="7" viewBox="0 0 5 7"><path d="M3.9 1.2 L1 3.5 L3.9 5.8" stroke="#00c800" stroke-width="0.95" fill="none"/></svg>
<div class="gb" style="top:392.16px"></div>
<div class="t" style="font-size:9px;color:#111;transform:translate(183.80px,381.57px) scaleX(0.9000) rotate(0.05deg);font-weight:bold;-webkit-text-stroke:0.28px;">0</div>
<div class="t" style="font-size:9.6px;color:#00d0d0;transform:translate(10.22px,409.22px) scaleX(0.8100) rotate(0.05deg);-webkit-text-stroke:0.15px;">103,95</div>
<div class="ar" style="left:100.5px;width:29.2px;top:428px;height:1px;box-shadow:0 1px 0 #003c00"></div>
<svg class="a" style="left:99.3px;top:425.21px" width="5" height="7" viewBox="0 0 5 7"><path d="M3.9 1.2 L1 3.5 L3.9 5.8" stroke="#00c800" stroke-width="0.95" fill="none"/></svg>
<div class="gb" style="top:419.41px"></div>
<div class="t" style="font-size:9px;color:#111;transform:translate(183.80px,408.81px) scaleX(0.9000) rotate(0.05deg);font-weight:bold;-webkit-text-stroke:0.28px;">0</div>
<div class="t" style="font-size:9.6px;color:#00d0d0;transform:translate(10.79px,436.46px) scaleX(0.8100) rotate(0.05deg);-webkit-text-stroke:0.15px;">115,50</div>
<div class="ar" style="left:100.5px;width:29.2px;top:455px;height:1px;box-shadow:0 1px 0 #003c00"></div>
<svg class="a" style="left:99.3px;top:452.45px" width="5" height="7" viewBox="0 0 5 7"><path d="M3.9 1.2 L1 3.5 L3.9 5.8" stroke="#00c800" stroke-width="0.95" fill="none"/></svg>
<div class="gb" style="top:446.65px"></div>
<div class="t" style="font-size:9px;color:#111;transform:translate(183.80px,436.06px) scaleX(0.9000) rotate(0.05deg);font-weight:bold;-webkit-text-stroke:0.28px;">0</div>
<div class="t" style="font-size:9.6px;color:#00d0d0;transform:translate(10.22px,463.71px) scaleX(0.8100) rotate(0.05deg);-webkit-text-stroke:0.15px;">127,05</div>
<div class="ar" style="left:100.5px;width:29.2px;top:483px;height:1px;box-shadow:0 1px 0 #003c00"></div>
<svg class="a" style="left:99.3px;top:479.69px" width="5" height="7" viewBox="0 0 5 7"><path d="M3.9 1.2 L1 3.5 L3.9 5.8" stroke="#00c800" stroke-width="0.95" fill="none"/></svg>
<div class="gb" style="top:473.89px"></div>
<div class="t" style="font-size:9px;color:#111;transform:translate(183.80px,463.30px) scaleX(0.9000) rotate(0.05deg);font-weight:bold;-webkit-text-stroke:0.28px;">0</div>
<div class="mod" style="top:182.80px"></div>
<div class="t" style="font-size:9.2px;color:#222;transform:translate(47.84px,174.97px) scaleX(0.9300) rotate(0.05deg);-webkit-text-stroke:0.15px;">Modulo 11</div>
<div class="mod" style="top:210.45px"></div>
<div class="t" style="font-size:9.2px;color:#222;transform:translate(47.52px,202.62px) scaleX(0.9300) rotate(0.05deg);-webkit-text-stroke:0.15px;">Modulo 10</div>
<div class="mod" style="top:238.10px"></div>
<div class="t" style="font-size:9.2px;color:#222;transform:translate(49.90px,230.27px) scaleX(0.9300) rotate(0.05deg);-webkit-text-stroke:0.15px;">Modulo 9</div>
<div class="mod" style="top:265.75px"></div>
<div class="t" style="font-size:9.2px;color:#222;transform:translate(49.90px,257.92px) scaleX(0.9300) rotate(0.05deg);-webkit-text-stroke:0.15px;">Modulo 8</div>
<div class="mod" style="top:293.40px"></div>
<div class="t" style="font-size:9.2px;color:#222;transform:translate(49.90px,285.57px) scaleX(0.9300) rotate(0.05deg);-webkit-text-stroke:0.15px;">Modulo 7</div>
<div class="mod" style="top:321.05px"></div>
<div class="t" style="font-size:9.2px;color:#222;transform:translate(49.90px,313.22px) scaleX(0.9300) rotate(0.05deg);-webkit-text-stroke:0.15px;">Modulo 6</div>
<div class="mod" style="top:348.70px"></div>
<div class="t" style="font-size:9.2px;color:#222;transform:translate(49.90px,340.87px) scaleX(0.9300) rotate(0.05deg);-webkit-text-stroke:0.15px;">Modulo 5</div>
<div class="mod" style="top:376.35px"></div>
<div class="t" style="font-size:9.2px;color:#222;transform:translate(49.90px,368.52px) scaleX(0.9300) rotate(0.05deg);-webkit-text-stroke:0.15px;">Modulo 4</div>
<div class="mod" style="top:404.00px"></div>
<div class="t" style="font-size:9.2px;color:#222;transform:translate(49.90px,396.17px) scaleX(0.9300) rotate(0.05deg);-webkit-text-stroke:0.15px;">Modulo 3</div>
<div class="mod" style="top:431.65px"></div>
<div class="t" style="font-size:9.2px;color:#222;transform:translate(49.90px,423.82px) scaleX(0.9300) rotate(0.05deg);-webkit-text-stroke:0.15px;">Modulo 2</div>
<div class="mod" style="top:459.30px"></div>
<div class="t" style="font-size:9.2px;color:#222;transform:translate(49.90px,451.47px) scaleX(0.9300) rotate(0.05deg);-webkit-text-stroke:0.15px;">Modulo 1</div>
<div class="bb" style="top:182.80px"></div>
<div class="t" style="font-size:9px;color:#fff;transform:translate(237.14px,167.50px) scaleX(0.9400) rotate(0.05deg);font-weight:bold;-webkit-text-stroke:0.28px;">0,0</div>
<div class="bb" style="top:198.40px"></div>
<div class="t" style="font-size:9px;color:#fff;transform:translate(237.14px,183.10px) scaleX(0.9400) rotate(0.05deg);font-weight:bold;-webkit-text-stroke:0.28px;">0,0</div>
<div class="bb" style="top:210.40px"></div>
<div class="t" style="font-size:9px;color:#fff;transform:translate(237.14px,195.10px) scaleX(0.9400) rotate(0.05deg);font-weight:bold;-webkit-text-stroke:0.28px;">0,0</div>
<div class="bb" style="top:226.10px"></div>
<div class="t" style="font-size:9px;color:#fff;transform:translate(237.14px,210.80px) scaleX(0.9400) rotate(0.05deg);font-weight:bold;-webkit-text-stroke:0.28px;">0,0</div>
<div class="bb" style="top:238.10px"></div>
<div class="t" style="font-size:9px;color:#fff;transform:translate(237.14px,222.80px) scaleX(0.9400) rotate(0.05deg);font-weight:bold;-webkit-text-stroke:0.28px;">0,0</div>
<div class="bb" style="top:253.80px"></div>
<div class="t" style="font-size:9px;color:#fff;transform:translate(237.14px,238.51px) scaleX(0.9400) rotate(0.05deg);font-weight:bold;-webkit-text-stroke:0.28px;">0,0</div>
<div class="bb" style="top:265.80px"></div>
<div class="t" style="font-size:9px;color:#fff;transform:translate(237.14px,250.51px) scaleX(0.9400) rotate(0.05deg);font-weight:bold;-webkit-text-stroke:0.28px;">0,0</div>
<div class="bb" style="top:281.50px"></div>
<div class="t" style="font-size:9px;color:#fff;transform:translate(237.14px,266.21px) scaleX(0.9400) rotate(0.05deg);font-weight:bold;-webkit-text-stroke:0.28px;">0,0</div>
<div class="bb" style="top:293.50px"></div>
<div class="t" style="font-size:9px;color:#fff;transform:translate(237.14px,278.21px) scaleX(0.9400) rotate(0.05deg);font-weight:bold;-webkit-text-stroke:0.28px;">0,0</div>
<div class="bb" style="top:309.20px"></div>
<div class="t" style="font-size:9px;color:#fff;transform:translate(237.14px,293.91px) scaleX(0.9400) rotate(0.05deg);font-weight:bold;-webkit-text-stroke:0.28px;">0,0</div>
<div class="bb" style="top:321.20px"></div>
<div class="t" style="font-size:9px;color:#fff;transform:translate(237.14px,305.91px) scaleX(0.9400) rotate(0.05deg);font-weight:bold;-webkit-text-stroke:0.28px;">0,0</div>
<div class="bb" style="top:336.90px"></div>
<div class="t" style="font-size:9px;color:#fff;transform:translate(237.14px,321.61px) scaleX(0.9400) rotate(0.05deg);font-weight:bold;-webkit-text-stroke:0.28px;">0,0</div>
<div class="bb" style="top:348.90px"></div>
<div class="t" style="font-size:9px;color:#fff;transform:translate(237.14px,333.61px) scaleX(0.9400) rotate(0.05deg);font-weight:bold;-webkit-text-stroke:0.28px;">0,0</div>
<div class="bb" style="top:364.60px"></div>
<div class="t" style="font-size:9px;color:#fff;transform:translate(237.14px,349.31px) scaleX(0.9400) rotate(0.05deg);font-weight:bold;-webkit-text-stroke:0.28px;">0,0</div>
<div class="bb" style="top:376.60px"></div>
<div class="t" style="font-size:9px;color:#fff;transform:translate(237.14px,361.31px) scaleX(0.9400) rotate(0.05deg);font-weight:bold;-webkit-text-stroke:0.28px;">0,0</div>
<div class="bb" style="top:392.30px"></div>
<div class="t" style="font-size:9px;color:#fff;transform:translate(237.14px,377.01px) scaleX(0.9400) rotate(0.05deg);font-weight:bold;-webkit-text-stroke:0.28px;">0,0</div>
<div class="bb" style="top:404.30px"></div>
<div class="t" style="font-size:9px;color:#fff;transform:translate(237.14px,389.01px) scaleX(0.9400) rotate(0.05deg);font-weight:bold;-webkit-text-stroke:0.28px;">0,0</div>
<div class="bb" style="top:420.00px"></div>
<div class="t" style="font-size:9px;color:#fff;transform:translate(237.14px,404.71px) scaleX(0.9400) rotate(0.05deg);font-weight:bold;-webkit-text-stroke:0.28px;">0,0</div>
<div class="bb" style="top:432.00px"></div>
<div class="t" style="font-size:9px;color:#fff;transform:translate(237.14px,416.71px) scaleX(0.9400) rotate(0.05deg);font-weight:bold;-webkit-text-stroke:0.28px;">0,0</div>
<div class="bb" style="top:447.70px"></div>
<div class="t" style="font-size:9px;color:#fff;transform:translate(237.14px,432.41px) scaleX(0.9400) rotate(0.05deg);font-weight:bold;-webkit-text-stroke:0.28px;">0,0</div>
<div class="bb" style="top:459.70px"></div>
<div class="t" style="font-size:9px;color:#fff;transform:translate(237.14px,444.41px) scaleX(0.9400) rotate(0.05deg);font-weight:bold;-webkit-text-stroke:0.28px;">0,0</div>
<div class="bb" style="top:475.10px"></div>
<div class="t" style="font-size:9px;color:#fff;transform:translate(237.14px,459.81px) scaleX(0.9400) rotate(0.05deg);font-weight:bold;-webkit-text-stroke:0.28px;">0,0</div>
<div class="t" style="font-size:9px;color:#00e4e4;transform:translate(339.60px,161.10px) scaleX(0.9395) rotate(0.05deg);font-weight:bold;-webkit-text-stroke:0.28px;">Peso dovela (Kg)</div>
<div class="t" style="font-size:9px;color:#00e4e4;transform:translate(424.70px,161.10px) scaleX(0.9184) rotate(0.05deg);font-weight:bold;-webkit-text-stroke:0.28px;">Posición (m)</div>
<div class="t" style="font-size:9px;color:#00e000;transform:translate(487.70px,161.10px) scaleX(0.9262) rotate(0.05deg);font-weight:bold;-webkit-text-stroke:0.28px;">Momentos (KNm)</div>
<div class="t" style="font-size:9px;color:#e4e4e4;transform:translate(297.00px,179.00px) scaleX(0.9306) rotate(0.05deg);font-weight:bold;-webkit-text-stroke:0.28px;">Cabestrante:</div>
<div class="sun" style="left:363.5px;top:190.9px;width:39px;height:15.8px;background:#ff0000"></div>
<div class="t" style="font-size:9px;color:#fff;transform:translate(393.00px,179.00px) scaleX(0.9200) rotate(0.05deg);font-weight:bold;-webkit-text-stroke:0.28px;">0</div>
<div class="sun" style="left:429px;top:190.9px;width:38.2px;height:15.8px;background:#ff0000"></div>
<div class="t" style="font-size:9px;color:#fff;transform:translate(445.36px,179.00px) scaleX(0.9500) rotate(0.05deg);font-weight:bold;-webkit-text-stroke:0.28px;">0,00</div>
<div class="t" style="font-size:9px;color:#00e4e4;transform:translate(323.00px,207.91px) scaleX(0.9196) rotate(0.05deg);font-weight:bold;-webkit-text-stroke:0.28px;">Nº</div>
<div class="t" style="font-size:9px;color:#00e4e4;transform:translate(349.30px,207.91px) scaleX(0.9218) rotate(0.05deg);font-weight:bold;-webkit-text-stroke:0.28px;">Reacción (KN)</div>
<div class="t" style="font-size:9px;color:#00e4e4;transform:translate(424.70px,207.91px) scaleX(0.9184) rotate(0.05deg);font-weight:bold;-webkit-text-stroke:0.28px;">Posición (m)</div>
<div class="t" style="font-size:9px;color:#00e000;transform:translate(487.70px,207.91px) scaleX(0.9262) rotate(0.05deg);font-weight:bold;-webkit-text-stroke:0.28px;">Momentos (KNm)</div>
<div class="ar" style="left:471px;width:18.5px;top:198px;height:1px;box-shadow:0 1px 0 #003c00"></div>
<svg class="a" style="left:485.7px;top:194.70px" width="5" height="7" viewBox="0 0 5 7"><path d="M1.1 1.2 L4 3.5 L1.1 5.8" stroke="#00c800" stroke-width="0.95" fill="none"/></svg>
<div class="btn" style="left:493.7px;top:189px;width:58.5px;height:19.5px"></div>
<div class="t" style="font-size:9px;color:#2a2a2a;transform:translate(517.11px,178.70px) scaleX(0.9300) rotate(0.05deg);-webkit-text-stroke:0.15px;">PintaMC</div>
<svg class="a" style="left:553.9px;top:193.50px" width="7" height="7" viewBox="-3.5 -3.5 7 7"><circle r="2.3" fill="#e80000"/><circle cx="-0.5" cy="-0.6" r="0.8" fill="#ff8a8a"/></svg>
<div class="t" style="font-size:9px;color:#e4e4e4;transform:translate(263.60px,224.30px) scaleX(0.9644) rotate(0.05deg);font-weight:bold;-webkit-text-stroke:0.28px;">1º Binario:</div>
<div class="sun" style="left:316px;top:236.2px;width:20px;height:15.80px;background:#fff"></div>
<div class="t" style="font-size:9px;color:#111;transform:translate(326.60px,224.30px) scaleX(0.9200) rotate(0.05deg);font-weight:bold;-webkit-text-stroke:0.28px;">1</div>
<div class="sun" style="left:351px;top:236.2px;width:53.5px;height:15.80px;background:#ff0000"></div>
<div class="t" style="font-size:9px;color:#fff;transform:translate(377.80px,224.30px) scaleX(0.9500) rotate(0.05deg);font-weight:bold;-webkit-text-stroke:0.28px;">0,000</div>
<div class="sun" style="left:429px;top:236.2px;width:38.2px;height:15.80px;background:#fff"></div>
<div class="t" style="font-size:9px;color:#111;transform:translate(440.60px,224.30px) scaleX(0.9500) rotate(0.05deg);font-weight:bold;-webkit-text-stroke:0.28px;">12,00</div>
<div class="ar" style="left:471px;width:18.5px;top:244px;height:1px;box-shadow:0 1px 0 #003c00"></div>
<svg class="a" style="left:485.7px;top:240.90px" width="5" height="7" viewBox="0 0 5 7"><path d="M1.1 1.2 L4 3.5 L1.1 5.8" stroke="#00c800" stroke-width="0.95" fill="none"/></svg>
<div class="btn" style="left:493.7px;top:234px;width:58.5px;height:19.00px"></div>
<div class="t" style="font-size:9px;color:#2a2a2a;transform:translate(511.41px,223.80px) scaleX(0.9300) rotate(0.05deg);-webkit-text-stroke:0.15px;">PintaMB1</div>
<svg class="a" style="left:553.9px;top:238.30px" width="7" height="7" viewBox="-3.5 -3.5 7 7"><circle r="2.3" fill="#e80000"/><circle cx="-0.5" cy="-0.6" r="0.8" fill="#ff8a8a"/></svg>
<div class="t" style="font-size:9px;color:#e4e4e4;transform:translate(263.60px,245.86px) scaleX(0.9644) rotate(0.05deg);font-weight:bold;-webkit-text-stroke:0.28px;">2º Binario:</div>
<div class="sun" style="left:316px;top:257.8px;width:20px;height:15.70px;background:#fff"></div>
<div class="t" style="font-size:9px;color:#111;transform:translate(326.60px,245.86px) scaleX(0.9200) rotate(0.05deg);font-weight:bold;-webkit-text-stroke:0.28px;">2</div>
<div class="sun" style="left:351px;top:257.8px;width:53.5px;height:15.70px;background:#ff0000"></div>
<div class="t" style="font-size:9px;color:#fff;transform:translate(377.80px,245.86px) scaleX(0.9500) rotate(0.05deg);font-weight:bold;-webkit-text-stroke:0.28px;">0,000</div>
<div class="sun" style="left:429px;top:257.8px;width:38.2px;height:15.70px;background:#fff"></div>
<div class="t" style="font-size:9px;color:#111;transform:translate(440.60px,245.86px) scaleX(0.9500) rotate(0.05deg);font-weight:bold;-webkit-text-stroke:0.28px;">32,00</div>
<div class="ar" style="left:471px;width:18.5px;top:265px;height:1px;box-shadow:0 1px 0 #003c00"></div>
<svg class="a" style="left:485.7px;top:262.50px" width="5" height="7" viewBox="0 0 5 7"><path d="M1.1 1.2 L4 3.5 L1.1 5.8" stroke="#00c800" stroke-width="0.95" fill="none"/></svg>
<div class="btn" style="left:493.7px;top:256.3px;width:58.5px;height:18.70px"></div>
<div class="t" style="font-size:9px;color:#2a2a2a;transform:translate(511.41px,245.95px) scaleX(0.9300) rotate(0.05deg);-webkit-text-stroke:0.15px;">PintaMB2</div>
<svg class="a" style="left:553.9px;top:260.80px" width="7" height="7" viewBox="-3.5 -3.5 7 7"><circle r="2.3" fill="#e80000"/><circle cx="-0.5" cy="-0.6" r="0.8" fill="#ff8a8a"/></svg>
<div class="t" style="font-size:9px;color:#e4e4e4;transform:translate(263.60px,268.31px) scaleX(0.9644) rotate(0.05deg);font-weight:bold;-webkit-text-stroke:0.28px;">3º Binario:</div>
<div class="sun" style="left:316px;top:280.4px;width:20px;height:15.40px;background:#fff"></div>
<div class="t" style="font-size:9px;color:#111;transform:translate(326.60px,268.31px) scaleX(0.9200) rotate(0.05deg);font-weight:bold;-webkit-text-stroke:0.28px;">3</div>
<div class="sun" style="left:351px;top:280.4px;width:53.5px;height:15.40px;background:#ff0000"></div>
<div class="t" style="font-size:9px;color:#fff;transform:translate(377.80px,268.31px) scaleX(0.9500) rotate(0.05deg);font-weight:bold;-webkit-text-stroke:0.28px;">0,000</div>
<div class="sun" style="left:429px;top:280.4px;width:38.2px;height:15.40px;background:#fff"></div>
<div class="t" style="font-size:9px;color:#111;transform:translate(435.85px,268.31px) scaleX(0.9500) rotate(0.05deg);font-weight:bold;-webkit-text-stroke:0.28px;">127,00</div>
<div class="ar" style="left:471px;width:18.5px;top:288px;height:1px;box-shadow:0 1px 0 #003c00"></div>
<svg class="a" style="left:485.7px;top:285.10px" width="5" height="7" viewBox="0 0 5 7"><path d="M1.1 1.2 L4 3.5 L1.1 5.8" stroke="#00c800" stroke-width="0.95" fill="none"/></svg>
<div class="btn" style="left:493.7px;top:279px;width:58.5px;height:18.70px"></div>
<div class="t" style="font-size:9px;color:#2a2a2a;transform:translate(511.41px,268.66px) scaleX(0.9300) rotate(0.05deg);-webkit-text-stroke:0.15px;">PintaMB3</div>
<svg class="a" style="left:553.9px;top:284.10px" width="7" height="7" viewBox="-3.5 -3.5 7 7"><circle r="2.3" fill="#e80000"/><circle cx="-0.5" cy="-0.6" r="0.8" fill="#ff8a8a"/></svg>
<div class="a" style="left:270.8px;top:315.9px;width:308.2px;height:116.8px;background:#d4d0c8"></div>
<div class="a" style="left:271.6px;top:319.9px;width:306.6px;height:0.9px;background:#8c8880"></div>
<div class="a" style="left:271.6px;top:320.8px;width:306.6px;height:0.8px;background:#fff"></div>
<div class="a" style="left:271.5px;top:320.8px;width:0.9px;height:111.8px;background:#fff"></div>
<div class="a" style="left:577.3px;top:319.9px;width:0.8px;height:112px;background:#8c8880"></div>
<div class="a" style="left:578.1px;top:319.9px;width:0.9px;height:112.9px;background:#fff"></div>
<div class="a" style="left:271.6px;top:431.2px;width:306.4px;height:0.7px;background:#a8a49c"></div>
<div class="a" style="left:271.6px;top:431.9px;width:307.4px;height:0.9px;background:#fff"></div>
<div class="a" style="left:277.3px;top:318px;width:107.2px;height:6px;background:#d4d0c8"></div>
<div class="t" style="font-size:9.2px;color:#0000ff;transform:translate(279.50px,301.37px) scaleX(0.9995) rotate(0.05deg);font-weight:bold;-webkit-text-stroke:0.28px;">Cuerdas vibrantes (KN)</div>
<svg class="a" style="left:281.7px;top:331.30px" width="7" height="7" viewBox="-3.5 -3.5 7 7"><circle r="2.7" fill="#e80000"/><circle cx="-0.5" cy="-0.6" r="0.8" fill="#ff8a8a"/></svg>
<div class="t" style="font-size:9.2px;color:#000080;transform:translate(342.60px,315.47px) scaleX(0.9920) rotate(0.05deg);font-weight:bold;-webkit-text-stroke:0.28px;">Célula 1</div>
<div class="t" style="font-size:9.2px;color:#000080;transform:translate(405.50px,315.47px) scaleX(0.9920) rotate(0.05deg);font-weight:bold;-webkit-text-stroke:0.28px;">Célula 2</div>
<div class="t" style="font-size:9.2px;color:#000080;transform:translate(468.00px,315.47px) scaleX(0.9920) rotate(0.05deg);font-weight:bold;-webkit-text-stroke:0.28px;">Célula 3</div>
<div class="t" style="font-size:9.2px;color:#000080;transform:translate(530.60px,315.47px) scaleX(0.9920) rotate(0.05deg);font-weight:bold;-webkit-text-stroke:0.28px;">Célula 4</div>
<div class="t" style="font-size:9.2px;color:#000080;transform:translate(276.50px,334.82px) scaleX(0.9962) rotate(0.05deg);font-weight:bold;-webkit-text-stroke:0.28px;">Cuerda A</div>
<div class="sun" style="left:324.8px;top:346.8px;width:55.1px;height:15.70px;background:#d4d0c8;border-width:1px;border-color:#948f87 #fff #fff #948f87"></div>
<div class="t" style="font-size:9.2px;color:#0000ff;transform:translate(353.84px,334.82px) scaleX(0.9800) rotate(0.05deg);font-weight:bold;-webkit-text-stroke:0.28px;">0,000</div>
<div class="sun" style="left:388px;top:346.8px;width:55.2px;height:15.70px;background:#d4d0c8;border-width:1px;border-color:#948f87 #fff #fff #948f87"></div>
<div class="t" style="font-size:9.2px;color:#0000ff;transform:translate(417.14px,334.82px) scaleX(0.9800) rotate(0.05deg);font-weight:bold;-webkit-text-stroke:0.28px;">0,000</div>
<div class="sun" style="left:450.5px;top:346.8px;width:54.5px;height:15.70px;background:#d4d0c8;border-width:1px;border-color:#948f87 #fff #fff #948f87"></div>
<div class="t" style="font-size:9.2px;color:#0000ff;transform:translate(478.94px,334.82px) scaleX(0.9800) rotate(0.05deg);font-weight:bold;-webkit-text-stroke:0.28px;">0,000</div>
<div class="sun" style="left:513px;top:346.8px;width:55.0px;height:15.70px;background:#d4d0c8;border-width:1px;border-color:#948f87 #fff #fff #948f87"></div>
<div class="t" style="font-size:9.2px;color:#0000ff;transform:translate(541.94px,334.82px) scaleX(0.9800) rotate(0.05deg);font-weight:bold;-webkit-text-stroke:0.28px;">0,000</div>
<div class="t" style="font-size:9.2px;color:#000080;transform:translate(276.50px,355.52px) scaleX(0.9878) rotate(0.05deg);font-weight:bold;-webkit-text-stroke:0.28px;">Cuerda B</div>
<div class="sun" style="left:324.8px;top:367.4px;width:55.1px;height:15.90px;background:#d4d0c8;border-width:1px;border-color:#948f87 #fff #fff #948f87"></div>
<div class="t" style="font-size:9.2px;color:#0000ff;transform:translate(353.84px,355.52px) scaleX(0.9800) rotate(0.05deg);font-weight:bold;-webkit-text-stroke:0.28px;">0,000</div>
<div class="sun" style="left:388px;top:367.4px;width:55.2px;height:15.90px;background:#d4d0c8;border-width:1px;border-color:#948f87 #fff #fff #948f87"></div>
<div class="t" style="font-size:9.2px;color:#0000ff;transform:translate(417.14px,355.52px) scaleX(0.9800) rotate(0.05deg);font-weight:bold;-webkit-text-stroke:0.28px;">0,000</div>
<div class="sun" style="left:450.5px;top:367.4px;width:54.5px;height:15.90px;background:#d4d0c8;border-width:1px;border-color:#948f87 #fff #fff #948f87"></div>
<div class="t" style="font-size:9.2px;color:#0000ff;transform:translate(478.94px,355.52px) scaleX(0.9800) rotate(0.05deg);font-weight:bold;-webkit-text-stroke:0.28px;">0,000</div>
<div class="sun" style="left:513px;top:367.4px;width:55.0px;height:15.90px;background:#d4d0c8;border-width:1px;border-color:#948f87 #fff #fff #948f87"></div>
<div class="t" style="font-size:9.2px;color:#0000ff;transform:translate(541.94px,355.52px) scaleX(0.9800) rotate(0.05deg);font-weight:bold;-webkit-text-stroke:0.28px;">0,000</div>
<div class="t" style="font-size:9.2px;color:#000080;transform:translate(276.50px,375.82px) scaleX(0.9878) rotate(0.05deg);font-weight:bold;-webkit-text-stroke:0.28px;">Cuerda C</div>
<div class="sun" style="left:324.8px;top:387.8px;width:55.1px;height:15.70px;background:#d4d0c8;border-width:1px;border-color:#948f87 #fff #fff #948f87"></div>
<div class="t" style="font-size:9.2px;color:#0000ff;transform:translate(353.84px,375.82px) scaleX(0.9800) rotate(0.05deg);font-weight:bold;-webkit-text-stroke:0.28px;">0,000</div>
<div class="sun" style="left:388px;top:387.8px;width:55.2px;height:15.70px;background:#d4d0c8;border-width:1px;border-color:#948f87 #fff #fff #948f87"></div>
<div class="t" style="font-size:9.2px;color:#0000ff;transform:translate(417.14px,375.82px) scaleX(0.9800) rotate(0.05deg);font-weight:bold;-webkit-text-stroke:0.28px;">0,000</div>
<div class="sun" style="left:450.5px;top:387.8px;width:54.5px;height:15.70px;background:#d4d0c8;border-width:1px;border-color:#948f87 #fff #fff #948f87"></div>
<div class="t" style="font-size:9.2px;color:#0000ff;transform:translate(478.94px,375.82px) scaleX(0.9800) rotate(0.05deg);font-weight:bold;-webkit-text-stroke:0.28px;">0,000</div>
<div class="sun" style="left:513px;top:387.8px;width:55.0px;height:15.70px;background:#d4d0c8;border-width:1px;border-color:#948f87 #fff #fff #948f87"></div>
<div class="t" style="font-size:9.2px;color:#0000ff;transform:translate(541.94px,375.82px) scaleX(0.9800) rotate(0.05deg);font-weight:bold;-webkit-text-stroke:0.28px;">0,000</div>
<div class="sun" style="left:324.8px;top:411px;width:55.1px;height:16.10px;background:#d4d0c8;border-width:1px;border-color:#948f87 #fff #fff #948f87"></div>
<div class="t" style="font-size:9.2px;color:#900010;transform:translate(353.84px,399.22px) scaleX(0.9800) rotate(0.05deg);font-weight:bold;-webkit-text-stroke:0.28px;">0,000</div>
<div class="sun" style="left:388px;top:411px;width:55.2px;height:16.10px;background:#d4d0c8;border-width:1px;border-color:#948f87 #fff #fff #948f87"></div>
<div class="t" style="font-size:9.2px;color:#900010;transform:translate(417.14px,399.22px) scaleX(0.9800) rotate(0.05deg);font-weight:bold;-webkit-text-stroke:0.28px;">0,000</div>
<div class="sun" style="left:450.5px;top:411px;width:54.5px;height:16.10px;background:#d4d0c8;border-width:1px;border-color:#948f87 #fff #fff #948f87"></div>
<div class="t" style="font-size:9.2px;color:#900010;transform:translate(478.94px,399.22px) scaleX(0.9800) rotate(0.05deg);font-weight:bold;-webkit-text-stroke:0.28px;">0,000</div>
<div class="sun" style="left:513px;top:411px;width:55.0px;height:16.10px;background:#d4d0c8;border-width:1px;border-color:#948f87 #fff #fff #948f87"></div>
<div class="t" style="font-size:9.2px;color:#900010;transform:translate(541.94px,399.22px) scaleX(0.9800) rotate(0.05deg);font-weight:bold;-webkit-text-stroke:0.28px;">0,000</div>
<div class="t" style="font-size:9px;color:#e8e800;transform:translate(270.30px,452.11px) scaleX(0.9175) rotate(0.05deg);-webkit-text-stroke:0.15px;">TRAMARECIBIDA</div>
<div class="btn" style="left:639.7px;top:146.3px;width:81.6px;height:18.9px"></div>
<div class="t" style="font-size:9.2px;color:#222;transform:translate(644.00px,136.57px) scaleX(0.9235) rotate(0.05deg);font-weight:bold;-webkit-text-stroke:0.28px;">Grafica momentos</div>
<div class="t" style="font-size:9.4px;color:#f0f000;transform:translate(605.80px,161.14px) scaleX(0.9813) rotate(0.05deg);font-weight:bold;-webkit-text-stroke:0.28px;">Posición cálculo (m)</div>
<div class="t" style="font-size:9.4px;color:#00e000;transform:translate(703.80px,161.14px) scaleX(0.9521) rotate(0.05deg);font-weight:bold;-webkit-text-stroke:0.28px;">Momento (KNm)</div>
<div class="sun" style="left:621.9px;top:203px;width:38.6px;height:15.9px;background:#fff"></div>
<div class="t" style="font-size:9px;color:#111;transform:translate(634.10px,190.80px) scaleX(0.9500) rotate(0.05deg);font-weight:bold;-webkit-text-stroke:0.28px;">80,85</div>
<div class="btn" style="left:664.1px;top:193.1px;width:22.7px;height:18.9px;border-color:#f0efea #8c8880 #8c8880 #f0efea;box-shadow:none"></div>
<div class="btn" style="left:664.1px;top:213.4px;width:22.7px;height:17.3px;border-color:#f0efea #8c8880 #8c8880 #f0efea;box-shadow:none"></div>
<svg class="a" style="left:664px;top:193px" width="24" height="38" viewBox="0 0 24 38">
<defs><linearGradient id="g1" x1="0" y1="0" x2="0" y2="1"><stop offset="0" stop-color="#b0b0b0"/><stop offset="0.5" stop-color="#787878"/><stop offset="1" stop-color="#c8c8c8"/></linearGradient>
<linearGradient id="g2" x1="0" y1="0" x2="0" y2="1"><stop offset="0" stop-color="#8a8a8a"/><stop offset="1" stop-color="#d0d0d0"/></linearGradient></defs>
<path d="M11.8 6 L20.2 14.3 H3.5 Z" fill="url(#g1)" stroke="#333" stroke-width="0.9" stroke-linejoin="round"/><path d="M3.5 14.9 H20.4" stroke="#f8f8f8" stroke-width="0.7"/>
<path d="M3.5 25.2 H20.2 L11.8 34 Z" fill="url(#g2)" stroke="#333" stroke-width="0.9" stroke-linejoin="round"/>
</svg>
<div class="sun" style="left:704.8px;top:201px;width:55.8px;height:19px;background:#d4d0c8;border-color:#808080 #fff #fff #808080"></div>
<div class="t" style="font-size:9px;color:#222;transform:translate(752.60px,191.10px) scaleX(0.9200) rotate(0.05deg);-webkit-text-stroke:0.15px;">0</div>
<div class="a" style="left:621.6px;top:392.2px;width:128.9px;height:43.4px;background:#fdd12f"></div>
<div class="a" style="left:621.6px;top:435.5px;width:128.9px;height:21.2px;background:#205098"></div>
<div class="t" style="font-size:29.6px;color:#000;transform:translate(637.00px,393.51px) scaleX(0.8390) rotate(0.05deg);font-weight:bold;font-style:italic;-webkit-text-stroke:1.1px #000;">ferrovial</div>
<div class="t" style="font-size:12.6px;color:#fff;transform:translate(659.40px,427.95px) scaleX(0.8016) rotate(0.05deg);font-weight:bold;font-style:italic;-webkit-text-stroke:0.45px #fff;">AGROMAN</div>
<svg class="a" style="left:666px;top:423px" width="46" height="18" viewBox="666 423 46 18">
<defs><clipPath id="cu"><rect x="666" y="423" width="46" height="12.5"/></clipPath><clipPath id="cl"><rect x="666" y="435.5" width="46" height="6"/></clipPath>
<path id="bd" d="M686.6 435 L708.4 426.5 L696.4 438.6 L678.6 438.6 L686 435.9 H699 M669.9 438.5 L680.2 433.6 L685.2 435.5" fill="none" stroke-linejoin="round" stroke-linecap="round"/></defs>
<use href="#bd" stroke="#000" stroke-width="1.3" clip-path="url(#cu)"/>
<use href="#bd" stroke="#fff" stroke-width="1.4" clip-path="url(#cl)"/>
</svg>
</div></body></html>
